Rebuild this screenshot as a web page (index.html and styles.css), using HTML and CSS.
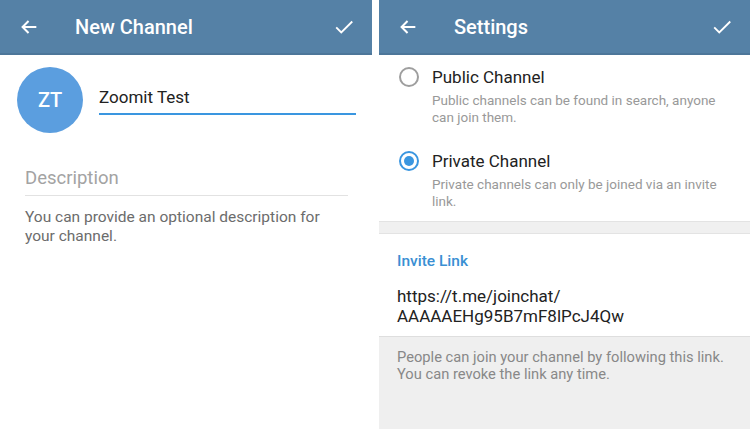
FILE: index.html
```html
<!DOCTYPE html>
<html>
<head>
<meta name="viewport" content="width=device-width, initial-scale=1">
<link rel="stylesheet" href="styles.css">
</head>
<body>

<div class="screen screen-left">
	<div class="bar">
		<svg class="bar-icon" viewBox="0 0 24 24"><path d="M20 12H5M11.5 5.5L5 12l6.5 6.5" fill="none" stroke="#fff" stroke-width="2.2"/></svg>
		<div class="bar-title">New Channel</div>
		<svg class="bar-check" viewBox="0 0 24 24"><path d="M3.5 12.5l5.5 5.5L21 6" fill="none" stroke="#fff" stroke-width="2"/></svg>
	</div>

	<div class="profile">
		<div class="avatar">ZT</div>
		<div class="name-field">Zoomit Test</div>
	</div>

	<div class="desc-field">Description</div>
	<div class="desc-help">You can provide an optional description for your channel.</div>
</div>

<div class="screen screen-right">
	<div class="bar">
		<svg class="bar-icon" viewBox="0 0 24 24"><path d="M20 12H5M11.5 5.5L5 12l6.5 6.5" fill="none" stroke="#fff" stroke-width="2.2"/></svg>
		<div class="bar-title">Settings</div>
		<svg class="bar-check" viewBox="0 0 24 24"><path d="M3.5 12.5l5.5 5.5L21 6" fill="none" stroke="#fff" stroke-width="2"/></svg>
	</div>

	<div class="options">
		<div class="option">
			<div class="radio"></div>
			<div class="option-text">
				<div class="option-title">Public Channel</div>
				<div class="option-sub">Public channels can be found in search, anyone can join them.</div>
			</div>
		</div>
		<div class="option option-second">
			<div class="radio radio-on"><div class="radio-dot"></div></div>
			<div class="option-text">
				<div class="option-title">Private Channel</div>
				<div class="option-sub">Private channels can only be joined via an invite link.</div>
			</div>
		</div>
	</div>

	<div class="divider"></div>

	<div class="invite">
		<div class="invite-head">Invite Link</div>
		<div class="invite-link">https://t.me/joinchat/<br>AAAAAEHg95B7mF8lPcJ4Qw</div>
	</div>

	<div class="footer">
		People can join your channel by following this link. You can revoke the link any time.
	</div>
</div>

</body>
</html>
```

FILE: styles.css
```css
html, body {
	margin: 0;
	padding: 0;
	background: #fff;
}

body {
	display: flex;
	gap: 7px;
	width: 750px;
	height: 429px;
	overflow: hidden;
	font-family: Roboto, "Liberation Sans", sans-serif;
}

.screen {
	display: flex;
	flex-direction: column;
	height: 429px;
}

.screen-left {
	width: 372px;
}

.screen-right {
	flex: 1;
	background: #efefef;
}

/* header */

.bar {
	height: 53px;
	flex-shrink: 0;
	display: flex;
	align-items: center;
	background: #5581a6;
	border-bottom: 2px solid #4d7699;
	color: #fff;
}

.bar-icon {
	width: 22px;
	height: 22px;
	margin-left: 18px;
}

.bar-title {
	margin-left: 35px;
	font-size: 20px;
	font-weight: 500;
	flex: 1;
}

.bar-check {
	width: 22px;
	height: 22px;
	margin-right: 17px;
}

/* new channel */

.profile {
	display: flex;
	align-items: center;
	padding-top: 12px;
}

.avatar {
	width: 66px;
	height: 66px;
	margin-left: 17px;
	border-radius: 50%;
	background: #5b9edf;
	color: #fff;
	font-size: 20px;
	font-weight: 500;
	display: flex;
	align-items: center;
	justify-content: center;
}

.name-field {
	margin-left: 16px;
	width: 257px;
	font-size: 17px;
	line-height: 22px;
	color: #222;
	padding-bottom: 5px;
	border-bottom: 2px solid #3a96e0;
}

.desc-field {
	margin: 34px 0 0 25px;
	width: 323px;
	font-size: 18.5px;
	line-height: 22px;
	color: #a3a3a3;
	padding-bottom: 6px;
	border-bottom: 1px solid #e2e2e2;
}

.desc-help {
	margin: 12px 0 0 25px;
	width: 305px;
	font-size: 15.5px;
	line-height: 19px;
	color: #6c6c6c;
}

/* settings */

.options {
	background: #fff;
	padding: 11px 20px 12px 20px;
}

.option {
	display: flex;
}

.option-second {
	margin-top: 25px;
}

.radio {
	width: 16px;
	height: 16px;
	margin-top: 1px;
	border: 2px solid #9e9e9e;
	border-radius: 50%;
	flex-shrink: 0;
	display: flex;
	align-items: center;
	justify-content: center;
}

.radio-on {
	border-color: #3a96e0;
}

.radio-dot {
	width: 10px;
	height: 10px;
	border-radius: 50%;
	background: #3a96e0;
}

.option-text {
	margin-left: 13px;
}

.option-title {
	font-size: 17px;
	line-height: 22px;
	color: #222;
}

.option-sub {
	margin-top: 4px;
	font-size: 13.5px;
	line-height: 16.5px;
	color: #999;
}

.divider {
	height: 11px;
	background: #f0f0f0;
	border-top: 1px solid #e3e3e3;
	border-bottom: 1px solid #e3e3e3;
}

.invite {
	background: #fff;
	padding: 18px 18px 10px 18px;
}

.invite-head {
	font-size: 15.5px;
	line-height: 18px;
	font-weight: 500;
	color: #3a8fd3;
}

.invite-link {
	margin-top: 16px;
	font-size: 17px;
	line-height: 20px;
	color: #222;
}

.footer {
	flex: 1;
	padding: 12px 18px 0 18px;
	border-top: 1px solid #dedede;
	font-size: 14.7px;
	line-height: 17px;
	color: #888;
}
```
